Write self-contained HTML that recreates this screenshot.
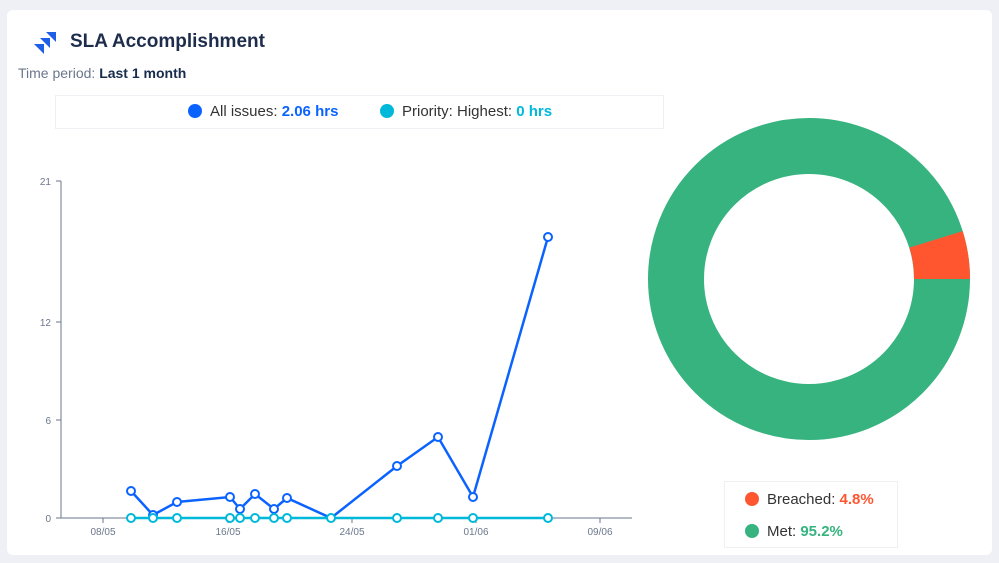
<!DOCTYPE html><html><head><style>
body{margin:0;width:999px;height:563px;background:#eef0f5;font-family:"Liberation Sans",sans-serif;overflow:hidden;position:relative}
.card{position:absolute;left:7px;top:10px;width:985px;height:545px;background:#fff;border-radius:6px}
.t{position:absolute;left:70px;top:31px;font-size:19px;font-weight:bold;color:#1f2d4d}
.p{position:absolute;left:18px;top:65px;font-size:14px;color:#6b778c}
.p b{color:#172b4d}
.lg{position:absolute;left:55px;top:95px;width:607px;height:32px;border:1px solid #eef0f3;font-size:15px;color:#333}
.dot{display:inline-block;width:14px;height:14px;border-radius:50%;vertical-align:-2px;margin-right:8px}
.lg2{position:absolute;left:724px;top:481px;width:172px;height:65px;border:1px solid #eef0f3;font-size:15px;color:#333}
</style></head><body>
<div class="card"></div>
<svg style="position:absolute;left:0;top:0" width="70" height="60"><g fill="#1f5ee6"><polygon points="46,32 56,32 56,42 51.5,37.5 50,36"/><polygon points="40,38 50,38 50,48 45.5,43.5 44,42"/><polygon points="34,44 44,44 44,54 39.5,49.5 38,48"/></g></svg>
<div class="t">SLA Accomplishment</div>
<div class="p">Time period: <b>Last 1 month</b></div>
<div class="lg"><div style="position:absolute;left:132px;top:7px"><span class="dot" style="background:#0b63ff"></span>All issues: <b style="color:#0b63ff">2.06 hrs</b></div><div style="position:absolute;left:324px;top:7px"><span class="dot" style="background:#00b8d9"></span>Priority: Highest: <b style="color:#00b8d9">0 hrs</b></div></div>
<svg style="position:absolute;left:0;top:0" width="999" height="563">
<g font-size="10" fill="#6b778c" font-family="Liberation Sans">
<line x1="61" y1="181" x2="61" y2="518" stroke="#6b778c"/><line x1="61" y1="518" x2="632" y2="518" stroke="#6b778c"/>
<g stroke="#6b778c"><line x1="56" y1="181" x2="61" y2="181"/><line x1="56" y1="322" x2="61" y2="322"/><line x1="56" y1="420" x2="61" y2="420"/><line x1="56" y1="518" x2="61" y2="518"/>
<line x1="103" y1="518" x2="103" y2="523"/><line x1="228" y1="518" x2="228" y2="523"/><line x1="352" y1="518" x2="352" y2="523"/><line x1="476" y1="518" x2="476" y2="523"/><line x1="600" y1="518" x2="600" y2="523"/></g>
<text x="51" y="185" text-anchor="end">21</text><text x="51" y="326" text-anchor="end">12</text><text x="51" y="424" text-anchor="end">6</text><text x="51" y="522" text-anchor="end">0</text>
<text x="103" y="535" text-anchor="middle">08/05</text><text x="228" y="535" text-anchor="middle">16/05</text><text x="352" y="535" text-anchor="middle">24/05</text><text x="476" y="535" text-anchor="middle">01/06</text><text x="600" y="535" text-anchor="middle">09/06</text></g>
<polyline fill="none" stroke="#0b63ff" stroke-width="2.5" points="131,491 153,515 177,502 230,497 240,509 255,494 274,509 287,498 331,518 397,466 438,437 473,497 548,237"/>
<polyline fill="none" stroke="#00b8d9" stroke-width="2.5" points="131,518 548,518"/>
<g fill="#fff" stroke="#0b63ff" stroke-width="2"><circle cx="131" cy="491" r="4"/><circle cx="153" cy="515" r="4"/><circle cx="177" cy="502" r="4"/><circle cx="230" cy="497" r="4"/><circle cx="240" cy="509" r="4"/><circle cx="255" cy="494" r="4"/><circle cx="274" cy="509" r="4"/><circle cx="287" cy="498" r="4"/><circle cx="397" cy="466" r="4"/><circle cx="438" cy="437" r="4"/><circle cx="473" cy="497" r="4"/><circle cx="548" cy="237" r="4"/></g>
<g fill="#fff" stroke="#00b8d9" stroke-width="2"><circle cx="131" cy="518" r="4"/><circle cx="153" cy="518" r="4"/><circle cx="177" cy="518" r="4"/><circle cx="230" cy="518" r="4"/><circle cx="240" cy="518" r="4"/><circle cx="255" cy="518" r="4"/><circle cx="274" cy="518" r="4"/><circle cx="287" cy="518" r="4"/><circle cx="331" cy="518" r="4"/><circle cx="397" cy="518" r="4"/><circle cx="438" cy="518" r="4"/><circle cx="473" cy="518" r="4"/><circle cx="548" cy="518" r="4"/></g>
<circle cx="809" cy="279" r="133" fill="none" stroke="#36b37e" stroke-width="56"/>
<path d="M970 279 A161 161 0 0 0 962.7 231.1 L909.4 247.6 A105 105 0 0 1 914 279Z" fill="#ff5630"/>
</svg>
<div class="lg2"><div style="position:absolute;left:20px;top:9px"><span class="dot" style="background:#ff5630"></span>Breached: <b style="color:#ff5630">4.8%</b></div><div style="position:absolute;left:20px;top:41px"><span class="dot" style="background:#36b37e"></span>Met: <b style="color:#36b37e">95.2%</b></div></div>
</body></html>
